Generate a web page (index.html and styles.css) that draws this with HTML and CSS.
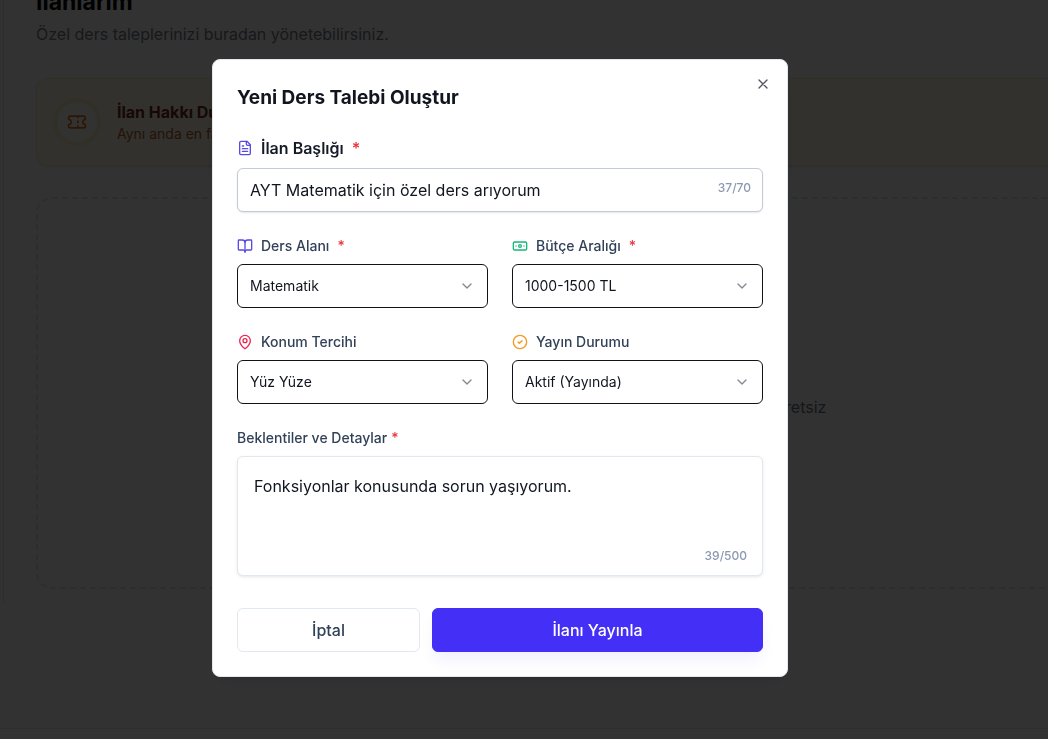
FILE: index.html
```html
<!DOCTYPE html>
<html lang="tr">
<head>
<meta charset="utf-8">
<meta name="viewport" content="width=device-width, initial-scale=1">
<title>Yeni Ders Talebi Oluştur</title>
<link rel="stylesheet" href="styles.css">
</head>
<body>
<div class="page">
  <div class="page-body">
    <aside class="sidebar"></aside>
    <main class="content">
      <h1 class="page-title">İlanlarım</h1>
      <p class="page-subtitle">Özel ders taleplerinizi buradan yönetebilirsiniz.</p>
      <section class="notice">
        <span class="notice-icon">
          <svg class="icon icon-large" viewBox="0 0 24 24"><path d="M2 9a3 3 0 0 1 0 6v2a2 2 0 0 0 2 2h16a2 2 0 0 0 2-2v-2a3 3 0 0 1 0-6V7a2 2 0 0 0-2-2H4a2 2 0 0 0-2 2Z"/><path d="M13 5v2M13 17v2M13 11v2"/></svg>
        </span>
        <div>
          <h2 class="notice-title">İlan Hakkı Durumu</h2>
          <p class="notice-text">Aynı anda en fazla 1 aktif ilanınız olabilir.</p>
        </div>
      </section>
      <section class="empty">
        <p>Henüz bir ilan oluşturmadınız. Hemen ilk ilanınızı verin, hepsi ücretsiz</p>
      </section>
    </main>
  </div>
  <footer class="footer"></footer>
</div>

<div class="overlay">
  <form class="dialog" role="dialog" aria-modal="true" aria-labelledby="dialog-title">
    <h2 class="dialog-title" id="dialog-title">Yeni Ders Talebi Oluştur</h2>
    <button class="close" type="button" aria-label="Kapat">
      <svg class="icon" viewBox="0 0 24 24"><path d="M18 6 6 18M6 6l12 12"/></svg>
    </button>

    <div class="field">
      <label class="label label-main" for="title">
        <svg class="icon indigo" viewBox="0 0 24 24"><path d="M15 2H6a2 2 0 0 0-2 2v16a2 2 0 0 0 2 2h12a2 2 0 0 0 2-2V7Z"/><path d="M14 2v4a2 2 0 0 0 2 2h4M10 9H8M16 13H8M16 17H8"/></svg>
        İlan Başlığı <span class="required">*</span>
      </label>
      <div class="control">
        <input class="box title-input" id="title" type="text" maxlength="70" value="AYT Matematik için özel ders arıyorum">
        <span class="counter counter-top">37/70</span>
      </div>
    </div>

    <div class="grid">
      <div class="field">
        <label class="label" for="subject">
          <svg class="icon indigo" viewBox="0 0 24 24"><path d="M12 7v14"/><path d="M3 18a1 1 0 0 1-1-1V4a1 1 0 0 1 1-1h5a4 4 0 0 1 4 4 4 4 0 0 1 4-4h5a1 1 0 0 1 1 1v13a1 1 0 0 1-1 1h-6a3 3 0 0 0-3 3 3 3 0 0 0-3-3z"/></svg>
          Ders Alanı <span class="required">*</span>
        </label>
        <div class="control">
          <select class="box select" id="subject"><option>Matematik</option></select>
          <svg class="icon chevron" viewBox="0 0 24 24"><path d="m6 9 6 6 6-6"/></svg>
        </div>
      </div>
      <div class="field">
        <label class="label" for="budget">
          <svg class="icon green" viewBox="0 0 24 24"><rect x="2" y="6" width="20" height="12" rx="2"/><circle cx="12" cy="12" r="2"/><path d="M6 12h.01M18 12h.01"/></svg>
          Bütçe Aralığı <span class="required">*</span>
        </label>
        <div class="control">
          <select class="box select" id="budget"><option>1000-1500 TL</option></select>
          <svg class="icon chevron" viewBox="0 0 24 24"><path d="m6 9 6 6 6-6"/></svg>
        </div>
      </div>
      <div class="field">
        <label class="label" for="place">
          <svg class="icon rose" viewBox="0 0 24 24"><path d="M20 10c0 4.993-5.539 10.193-7.399 11.799a1 1 0 0 1-1.202 0C9.539 20.193 4 14.993 4 10a8 8 0 0 1 16 0"/><circle cx="12" cy="10" r="3"/></svg>
          Konum Tercihi
        </label>
        <div class="control">
          <select class="box select" id="place"><option>Yüz Yüze</option></select>
          <svg class="icon chevron" viewBox="0 0 24 24"><path d="m6 9 6 6 6-6"/></svg>
        </div>
      </div>
      <div class="field">
        <label class="label" for="status">
          <svg class="icon amber" viewBox="0 0 24 24"><circle cx="12" cy="12" r="10"/><path d="m9 12 2 2 4-4"/></svg>
          Yayın Durumu
        </label>
        <div class="control">
          <select class="box select" id="status"><option>Aktif (Yayında)</option></select>
          <svg class="icon chevron" viewBox="0 0 24 24"><path d="m6 9 6 6 6-6"/></svg>
        </div>
      </div>
    </div>

    <div class="field">
      <label class="label label-plain" for="details">Beklentiler ve Detaylar <span class="required">*</span></label>
      <div class="control">
        <textarea class="box details" id="details" maxlength="500">Fonksiyonlar konusunda sorun yaşıyorum.</textarea>
        <span class="counter counter-bottom">39/500</span>
      </div>
    </div>

    <div class="actions">
      <button class="button button-cancel" type="button">İptal</button>
      <button class="button button-submit" type="submit">İlanı Yayınla</button>
    </div>
  </form>
</div>
</body>
</html>
```
FILE: styles.css
```css
* { box-sizing: border-box; }

body {
  margin: 0;
  overflow: hidden;
  font-family: Inter, "Liberation Sans", sans-serif;
  font-size: 16px;
  line-height: 24px;
  color: #10151f;
}

h1, h2, p { margin: 0; }
input, select, textarea, button { font: inherit; color: inherit; }

.icon {
  flex: none;
  width: 16px;
  height: 16px;
  fill: none;
  stroke: currentColor;
  stroke-width: 2;
  stroke-linecap: round;
  stroke-linejoin: round;
}
.icon-large { width: 20px; height: 20px; }
.indigo { color: #574ae6; }
.green { color: #14b87c; }
.rose { color: #ec2450; }
.amber { color: #f39a1e; }

/* Page behind the dialog */
.page {
  display: flex;
  flex-direction: column;
  height: 100vh;
  overflow: hidden;
  background: #f8fbfa;
}
.page-body { display: flex; flex: 1; align-items: flex-start; min-height: 0; }
.sidebar {
  flex: none;
  width: 4px;
  height: 605px;
  border-right: 1px solid #e6e0e4;
  border-bottom-right-radius: 4px;
  background: #fcfafa;
}
.content { flex: 1; margin: -14px -48px 0 32px; }
.page-title { font-size: 23px; line-height: 32px; font-weight: 700; color: #05070c; }
.page-subtitle { margin-top: 4px; color: #767b88; }
.notice {
  display: flex;
  align-items: center;
  gap: 16px;
  min-height: 88px;
  margin-top: 32px;
  padding: 0 16px;
  border: 1px solid #f8e6c0;
  border-radius: 12px;
  background: #fef5e6;
  box-shadow: 0 1px 3px rgba(0, 0, 0, 0.1);
}
.notice-icon {
  display: flex;
  align-items: center;
  justify-content: center;
  width: 48px;
  height: 48px;
  border: 4px solid #fae8bc;
  border-radius: 50%;
  background: #faf8f6;
  color: #d9741a;
}
.notice-title { font-size: 16px; line-height: 24px; font-weight: 700; color: #6e2a12; }
.notice-text { font-size: 14px; line-height: 20px; color: #b05a2c; }
.empty {
  display: flex;
  align-items: center;
  justify-content: center;
  min-height: 392px;
  margin-top: 31px;
  padding-top: 28px;
  border: 2px dashed #dadfe2;
  border-radius: 16px;
  color: #6c717c;
}
.footer { flex: none; height: 11px; border-top: 1px solid #e8e4e8; background: #ffffff; }

/* Dialog */
.overlay {
  position: fixed;
  inset: 0;
  display: flex;
  align-items: center;
  justify-content: center;
  padding: 0 48px 3px 0;
  background: rgba(0, 0, 0, 0.8);
}
.dialog {
  position: relative;
  display: flex;
  flex-direction: column;
  gap: 24px;
  width: 100%;
  max-width: 576px;
  padding: 24px;
  border: 1px solid #e2e8f0;
  border-radius: 8px;
  background: #ffffff;
  box-shadow: 0 10px 15px -3px rgba(0, 0, 0, 0.1), 0 4px 6px -4px rgba(0, 0, 0, 0.1);
}
.dialog-title { font-size: 19px; line-height: 28px; font-weight: 700; }
.close {
  position: absolute;
  top: 16px;
  right: 16px;
  display: flex;
  padding: 0;
  border: 0;
  background: none;
  color: #52555e;
}

.field { display: flex; flex-direction: column; gap: 8px; min-width: 0; }
.label {
  display: flex;
  align-items: center;
  gap: 8px;
  font-size: 14px;
  line-height: 20px;
  font-weight: 500;
  color: #314158;
}
.label-main { font-size: 16px; line-height: 24px; font-weight: 600; color: #141a26; }
.label-plain { gap: 4px; }
.required { color: #ee3340; }

.control { position: relative; display: flex; }
.box {
  width: 100%;
  height: 44px;
  margin: 0;
  padding: 0 12px;
  border: 1px solid #cad5e2;
  border-radius: 6px;
  outline: 0;
  background: #ffffff;
}
.title-input { padding-right: 64px; border-color: #c3cbd8; box-shadow: 0 1px 2px rgba(0, 0, 0, 0.1); }
.select { appearance: none; border-color: #10131a; font-size: 14px; }
.chevron {
  position: absolute;
  top: 14px;
  right: 13px;
  color: #858890;
  pointer-events: none;
}
.details {
  height: 120px;
  padding: 16px;
  border-color: #e2e8f0;
  line-height: 26px;
  resize: none;
  box-shadow: 0 1px 3px rgba(0, 0, 0, 0.1);
}
.counter {
  position: absolute;
  font-size: 12px;
  line-height: 16px;
  font-weight: 500;
  color: #8a99b2;
}
.counter-top { top: 12px; right: 12px; }
.counter-bottom { right: 16px; bottom: 12px; }

.grid { display: grid; grid-template-columns: 1fr 1fr; gap: 24px; }

.actions { display: grid; grid-template-columns: 21fr 38fr; gap: 12px; margin-top: 8px; }
.button {
  height: 44px;
  padding: 0 16px;
  border: 1px solid #e2e8f0;
  border-radius: 6px;
  background: #ffffff;
  font-weight: 500;
  color: #314158;
}
.button-submit {
  border-color: #432ff5;
  background: #432ff5;
  color: #ffffff;
  box-shadow: 0 10px 15px -3px rgba(67, 45, 245, 0.08);
}
```
